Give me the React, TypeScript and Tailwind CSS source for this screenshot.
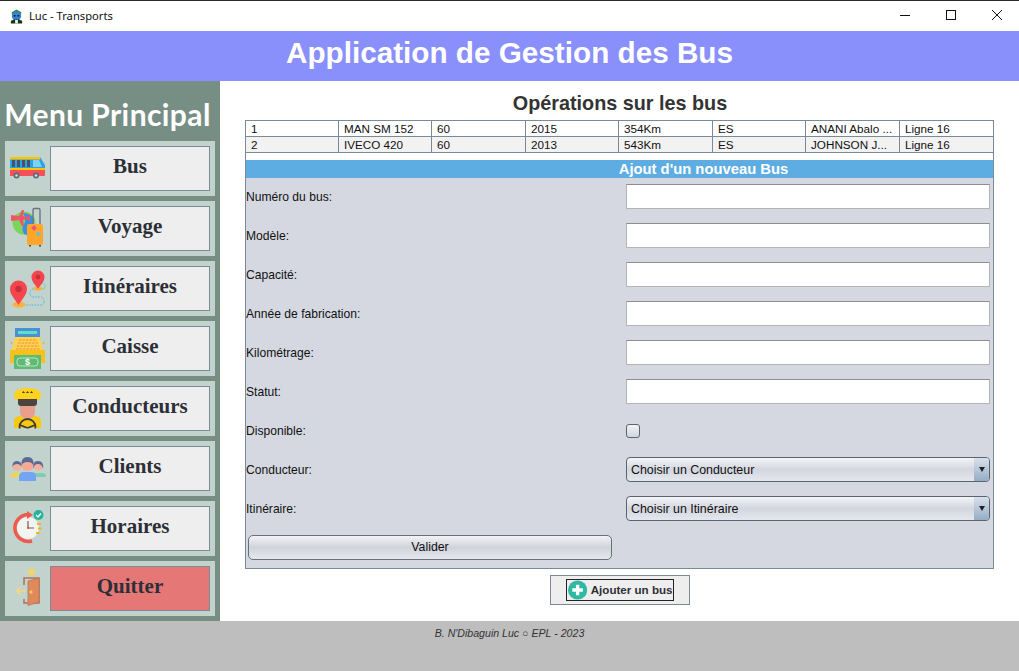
import React from 'react';

const sans = "font-['Liberation_Sans',Arial,sans-serif]";

function BusIcon() {
  return (
    <svg width="45" height="55" viewBox="5 0 45 55">
      <path d="M10 16h30l5 8v10H10z" fill="#29a3e8" />
      <rect x="10" y="16" width="30" height="2.5" fill="#ffc400" />
      <path d="M12 19h3v7h-3zM17 19h3v7h-3zM22 19h3v7h-3zM27 19h3v7h-3z" fill="#4a5266" />
      <path d="M33 19h6l3 7h-9z" fill="#7fd0f5" />
      <rect x="10" y="27" width="35" height="2" fill="#ffc400" />
      <path d="M10 29h35v5q0 1-1 1H10z" fill="#f4505a" />
      <circle cx="16.500" cy="34.500" r="3" fill="#596a7a" />
      <circle cx="16.500" cy="34.500" r="1.300" fill="#d8dde0" />
      <circle cx="36" cy="34.500" r="3" fill="#596a7a" />
      <circle cx="36" cy="34.500" r="1.300" fill="#d8dde0" />
    </svg>
  );
}

function VoyageIcon() {
  return (
    <svg width="45" height="55" viewBox="5 0 45 55">
      <circle cx="24" cy="22" r="11.500" fill="#7ed35f" />
      <path d="M23 12q8 0 11 6l-2 15q-4 2-8 0-3-6 0-10t-1-11z" fill="#3b8fe0" />
      <path d="M11 14l8 1 3-6h2l-1 6 5 1 1-2h1v6h-1l-1-2-5 1 1 6h-2l-3-6-8 1z" fill="#f0556a" />
      <path d="M33 24V9q0-1.500 1.500-1.500h4q1.500 0 1.500 1.500v15" fill="none" stroke="#6b7580" strokeWidth="1.400" />
      <rect x="27" y="23" width="16" height="21" rx="2" fill="#ffa62b" />
      <path d="M30 44v1.500M40 44v1.500" stroke="#4a4a4a" strokeWidth="2" />
      <path d="M31 27l3-3 3 3-3 3z" fill="#f0556a" />
      <path d="M36 31l5 1-3 4z" fill="#5cc0ea" />
    </svg>
  );
}

function ItineraireIcon() {
  return (
    <svg width="45" height="55" viewBox="5 0 45 55">
      <path d="M33 22h9q3 0 3 3t-3 3h-8q-4 0-4 4t4 4h6q4 0 4 4t-3 4H24" fill="none" stroke="#4fb3e8" strokeWidth="1" strokeDasharray="1.500 1.200" />
      <ellipse cx="19" cy="43.500" rx="6.500" ry="3" fill="#fbb040" />
      <path d="M18.500 44C14 37 10 33 10 28a8.500 8.500 0 0 1 17 0c0 5-4 9-8.500 16z" fill="#f4454f" />
      <circle cx="18.500" cy="28" r="3.200" fill="#c6303c" />
      <ellipse cx="38" cy="27.500" rx="4.500" ry="2" fill="#fbb040" />
      <path d="M38 28c-3-5-6.500-7.500-6.500-12a6.500 6.500 0 0 1 13 0c0 4.500-3.500 7-6.500 12z" fill="#f4454f" />
      <circle cx="38" cy="16" r="2.400" fill="#c6303c" />
    </svg>
  );
}

function CaisseIcon() {
  return (
    <svg width="45" height="55" viewBox="5 0 45 55">
      <rect x="15" y="7" width="25" height="9" fill="#4a90d9" />
      <rect x="18" y="10" width="19" height="3" fill="#5ee0c0" />
      <path d="M15 16h25l3 14H12z" fill="#ffd24d" />
      <path d="M19 19h18M18 22h20M17 25h22M16 28h24" stroke="#f08a3c" strokeWidth="1.200" strokeDasharray="2.500 1" />
      <rect x="10" y="29" width="35" height="13" fill="#f5c21b" />
      <rect x="14" y="34" width="27" height="14" fill="#5dbb73" />
      <rect x="17" y="37" width="21" height="8" rx="3" fill="none" stroke="#d7f0dc" strokeWidth="0.800" />
      <text x="27.500" y="44" textAnchor="middle" fontSize="9" fontWeight="700" fill="#fff" fontFamily="'Liberation Sans',sans-serif">$</text>
      <path d="M11 21l1 2M44 21l-1 2" stroke="#f5a623" strokeWidth="1.200" />
    </svg>
  );
}

function ConducteurIcon() {
  return (
    <svg width="45" height="55" viewBox="5 0 45 55">
      <path d="M14 39q0-3 6-4h15q6 1 6 4v8H14z" fill="#f7c912" />
      <path d="M20 20h15v11q0 6-7.500 7Q20 37 20 31z" fill="#e8a08c" />
      <path d="M14 15c0-6 6-8 13.500-8S41 9 41 15q0 4-4 4H18q-4 0-4-4z" fill="#ffd21f" />
      <path d="M22 12l1.500-2 1.500 2zM26 12l1.500-2 1.500 2zM30 12l1.500-2 1.500 2z" fill="#3a3a3a" />
      <path d="M18 18h19v4q0 3-3 3H21q-3 0-3-3z" fill="#4b4340" />
      <circle cx="27.500" cy="46" r="8" fill="none" stroke="#3e3a36" strokeWidth="1.800" />
      <path d="M20 44l7.500 3 7.500-3M27.500 47v6" fill="none" stroke="#3e3a36" strokeWidth="1.800" />
      <rect x="10" y="47.500" width="36" height="8" fill="#c2d2cc" />
    </svg>
  );
}

function ClientsIcon() {
  return (
    <svg width="45" height="55" viewBox="5 0 45 55">
      <path d="M10 36q0-4 4-4h7q4 0 4 4v0H10z" fill="#f5d547" />
      <circle cx="17" cy="25" r="4.500" fill="#f3b2a0" />
      <path d="M12.500 26q-.5-6 4.500-6t4.500 6q-1-3-4.500-3t-4.500 3z" fill="#5a6a92" />
      <path d="M32 36q0-4 3-4h7q4 0 4 4z" fill="#7fcdb8" />
      <circle cx="38" cy="25" r="4.500" fill="#f3b2a0" />
      <path d="M33 28q-1-8 5-8t5 8q-1-5-5-5t-5 5z" fill="#5a6a92" />
      <path d="M19 36q0-5 5-5h7q5 0 5 5v4H19z" fill="#74a4f6" />
      <circle cx="27.500" cy="24" r="6" fill="#f6a994" />
      <path d="M21.500 25q-1-9 6-9t6 9q-1-4-6-4t-6 4z" fill="#5a6a92" />
    </svg>
  );
}

function HorairesIcon() {
  return (
    <svg width="45" height="55" viewBox="5 0 45 55">
      <circle cx="28" cy="27" r="11" fill="#f3f3f0" />
      <path d="M28 13.500A13.500 13.500 0 1 0 32 40" fill="none" stroke="#ef5a4c" strokeWidth="3.500" />
      <path d="M27 10l6 4-6 4z" fill="#ef5a4c" />
      <path d="M28 27v-7M28 27h6" stroke="#7a5a5a" strokeWidth="1.200" />
      <circle cx="28" cy="27" r="1" fill="#d8453a" />
      <path d="M37 23h4M38 27.500h3.500M36 32h3.500" stroke="#f5b21b" strokeWidth="2" />
      <circle cx="38.500" cy="14" r="5" fill="#24b39b" />
      <path d="M36 14l2 2 3-3.500" fill="none" stroke="#fff" strokeWidth="1.300" />
    </svg>
  );
}

function QuitterIcon() {
  return (
    <svg width="45" height="55" viewBox="5 0 45 55">
      <circle cx="31.500" cy="11" r="3.500" fill="#f2d568" />
      <path d="M24 24v-7h15v25H24v-4" fill="none" stroke="#b5735a" strokeWidth="1.600" />
      <path d="M28 20l11-3v24l-11 3.500z" fill="#e08a5c" stroke="#b5735a" strokeWidth="0.800" />
      <circle cx="31" cy="31" r="1.500" fill="#f2d568" />
      <path d="M17 30h9M21 26l-4.500 4 4.500 4" fill="none" stroke="#f2d87a" strokeWidth="1.500" />
    </svg>
  );
}

const menu = [
  { label: 'Bus', Icon: BusIcon },
  { label: 'Voyage', Icon: VoyageIcon },
  { label: 'Itinéraires', Icon: ItineraireIcon },
  { label: 'Caisse', Icon: CaisseIcon },
  { label: 'Conducteurs', Icon: ConducteurIcon },
  { label: 'Clients', Icon: ClientsIcon },
  { label: 'Horaires', Icon: HorairesIcon },
  { label: 'Quitter', Icon: QuitterIcon, danger: true },
];

const buses = [
  ['1', 'MAN SM 152', '60', '2015', '354Km', 'ES', 'ANANI Abalo ...', 'Ligne 16'],
  ['2', 'IVECO 420', '60', '2013', '543Km', 'ES', 'JOHNSON J...', 'Ligne 16'],
];

function Label({ children }: { children: React.ReactNode }) {
  return <span className="w-[380px] pt-[2px] text-[12.1px] leading-none text-[#111]">{children}</span>;
}

function TextRow({ label }: { label: string }) {
  return (
    <div className="flex h-[25px] items-center">
      <Label>{label}</Label>
      <div className="h-[25px] w-[364px] border border-[#b4b4b4] border-t-[#8e8e8e] bg-white" />
    </div>
  );
}

function SelectRow({ label, value }: { label: string; value: string }) {
  return (
    <div className="flex h-[25px] items-center">
      <Label>{label}</Label>
      <div className="flex h-[25px] w-[364px] overflow-hidden rounded-[4px] border border-[#5b6470] bg-gradient-to-b from-[#f4f5f8] via-[#d3d6de] to-[#e4e7ee]">
        <span className="flex-1 pl-[4px] text-[12.4px] leading-[24px] text-[#111]">{value}</span>
        <span className="flex w-[15px] items-center justify-center bg-gradient-to-b from-[#d8e0ea] to-[#94aec6]">
          <span className="h-0 w-0 border-x-[3.5px] border-t-[5px] border-x-transparent border-t-[#222]" />
        </span>
      </div>
    </div>
  );
}

export default function App() {
  return (
    <div className={`flex h-[671px] w-[1019px] flex-col overflow-hidden bg-white ${sans}`}>
      {/* barre de titre */}
      <div className="flex h-[31px] items-center border-t border-[#2b2b2b] bg-white">
        <svg className="ml-[9px]" width="15" height="16" viewBox="0 0 16 16">
          <path d="M3 4l5-3 5 3v2H3z" fill="#1f8a3c" />
          <circle cx="8" cy="8" r="5" fill="#3d7fd0" />
          <path d="M5 7h2v1.500H5zM9 7h2v1.500H9z" fill="#123" />
          <path d="M2 16v-3l6-2 6 2v3z" fill="#14351f" />
          <path d="M6.500 12h3v4h-3z" fill="#e6efe8" />
        </svg>
        <span className="ml-[5px] font-['Noto_Sans',sans-serif] text-[11.2px] text-[#111]">Luc - Transports</span>
        <div className="ml-auto flex items-center">
          <svg width="46" height="30" viewBox="0 0 46 30">
            <path d="M19 14.500h10" stroke="#111" />
          </svg>
          <svg width="46" height="30" viewBox="0 0 46 30">
            <rect x="19.500" y="9.500" width="9" height="9" fill="none" stroke="#111" />
          </svg>
          <svg width="46" height="30" viewBox="0 0 46 30">
            <path d="M19 9l10 10M29 9L19 19" stroke="#111" />
          </svg>
        </div>
      </div>

      {/* bandeau */}
      <div className="flex h-[50px] items-center justify-center bg-[#8a90fb] pb-[5px] text-[29.7px] font-bold text-white">
        Application de Gestion des Bus
      </div>

      <div className="flex h-[540px]">
        {/* menu */}
        <div className="flex w-[220px] flex-col bg-[#778e85] px-[5px]">
          <div className="flex h-[60px] items-center justify-center pt-[6px] pr-[5px] font-['Lato',sans-serif] text-[30px] font-bold tracking-[0.4px] whitespace-nowrap text-white">
            Menu Principal
          </div>
          <div className="flex flex-col gap-[5px]">
            {menu.map(({ label, Icon, danger }) => (
              <div key={label} className="flex h-[55px] items-center bg-[#c2d2cc]">
                <div className="h-[55px] w-[45px] shrink-0">
                  <Icon />
                </div>
                <div
                  className={`flex h-[45px] w-[160px] items-center justify-center border border-[#7a8a99] pb-[4px] font-['Liberation_Serif',serif] text-[21px] font-bold text-[#2d2f36] ${
                    danger ? 'bg-[#e57777]' : 'bg-[#eeeeee]'
                  }`}
                >
                  {label}
                </div>
              </div>
            ))}
          </div>
        </div>

        {/* contenu */}
        <div className="flex flex-1 flex-col items-center bg-white">
          <h1 className="mt-[10px] h-[29px] w-full pl-[1px] text-center text-[19.8px] font-bold leading-[24px] text-[#333]">
            Opérations sur les bus
          </h1>
          <div className="flex w-[749px] flex-col border-r border-b border-l border-[#7a8a99]">
            <div className="border-t border-[#7a8a99]">
              {buses.map((row, i) => (
                <div
                  key={row[0]}
                  className={`grid h-[16px] grid-cols-[93px_93px_94px_93px_94px_93px_94px_94px] border-b border-[#7a8a99] text-[11.7px] leading-[15px] text-[#111] ${
                    i === 1 ? 'bg-[#f2f2f2]' : 'bg-white'
                  }`}
                >
                  {row.map((cell, j) => (
                    <span key={j} className="border-r border-[#7a8a99] pl-[5px] whitespace-nowrap">
                      {cell}
                    </span>
                  ))}
                </div>
              ))}
            </div>
            <div className="mt-[7px] flex h-[18px] items-center justify-center bg-[#5dade2] pl-[168px] text-[14.8px] font-bold text-white">
              <span className="whitespace-nowrap">Ajout d'un nouveau Bus</span>
            </div>
            <div className="flex h-[390px] flex-col gap-[14px] bg-[#d5d8e0] pt-[6px]">
              <TextRow label="Numéro du bus:" />
              <TextRow label="Modèle:" />
              <TextRow label="Capacité:" />
              <TextRow label="Année de fabrication:" />
              <TextRow label="Kilométrage:" />
              <TextRow label="Statut:" />
              <div className="flex h-[25px] items-center">
                <Label>Disponible:</Label>
                <div className="h-[14px] w-[14px] rounded-[3px] border border-[#5b6470] bg-gradient-to-b from-[#f2f3f6] to-[#d3d6de]" />
              </div>
              <SelectRow label="Conducteur:" value="Choisir un Conducteur" />
              <SelectRow label="Itinéraire:" value="Choisir un Itinéraire" />
              <div className="h-[25px] pl-[2px]">
                <div className="flex h-[25px] w-[364px] items-center justify-center rounded-[5px] border border-[#6a7078] bg-gradient-to-b from-[#f2f3f6] via-[#d0d3db] to-[#e6e8ee] text-[12.3px] text-[#111]">
                  Valider
                </div>
              </div>
            </div>
          </div>
          <div className="mt-[6px] flex h-[30px] w-[140px] items-center justify-center border border-[#7a8a99] bg-[#eeeeee]">
            <div className="flex h-[22px] w-[108px] items-center border border-[#222] text-[11.6px] font-bold whitespace-nowrap text-[#2d2f36]">
              <svg width="20" height="20" viewBox="0 0 20 20" className="ml-px">
                <circle cx="10" cy="10" r="10" fill="#2fb8a3" />
                <path d="M10 4.500v11M4.500 10h11" stroke="#fff" strokeWidth="3.500" />
              </svg>
              <span className="ml-[4px]">Ajouter un bus</span>
            </div>
          </div>
        </div>
      </div>

      {/* pied */}
      <div className="h-[50px] bg-[#bebebe] pt-[6px] text-center text-[10.6px] leading-[12px] italic text-[#333]">
        B. N'Dibaguin Luc ○ EPL - 2023
      </div>
    </div>
  );
}
